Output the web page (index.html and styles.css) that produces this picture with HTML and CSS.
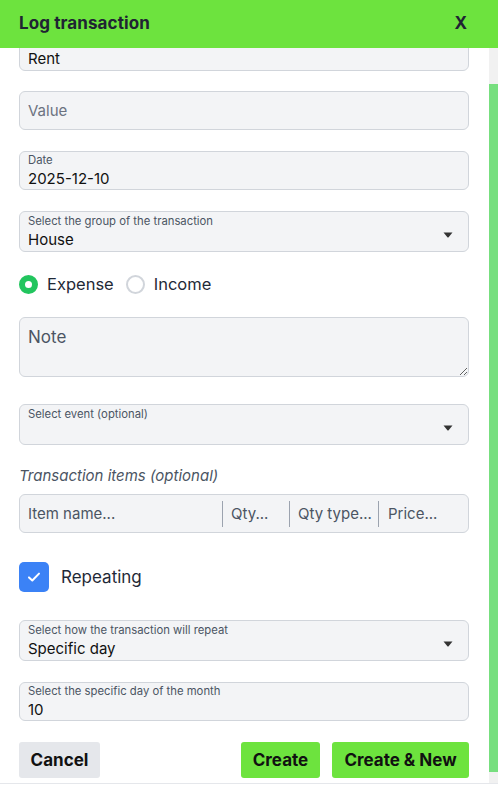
FILE: index.html
```html
<!DOCTYPE html>
<html>
<head>
<meta charset="utf-8">
<link rel="stylesheet" href="styles.css">
</head>
<body>
<div class="modal">
  <div class="header">
    <span class="title">Log transaction</span>
    <span class="close">X</span>
  </div>
  <div class="body">
    <div class="content">
      <div class="form">
        <div class="field labeled f-rent">
          <input class="value" type="text" value="Rent">
        </div>
        <div class="field plain f-value">
          <input class="value" type="text" placeholder="Value">
        </div>
        <div class="field labeled f-date">
          <span class="label">Date</span>
          <input class="value" type="text" value="2025-12-10">
        </div>
        <div class="field select f-group">
          <div class="select-text">
            <span class="label">Select the group of the transaction</span>
            <span class="value">House</span>
          </div>
          <svg class="arrow" width="10" height="6" viewBox="0 0 10 6"><path d="M0.5 0.5 H9.5 L5.6 5.3 Q5 5.9 4.4 5.3 Z" fill="#333"/></svg>
        </div>
        <div class="radios f-radio">
          <label class="radio"><span class="dot on"></span>Expense</label>
          <label class="radio"><span class="dot"></span>Income</label>
        </div>
        <textarea class="note f-note" placeholder="Note"></textarea>
        <div class="field select f-event">
          <div class="select-text">
            <span class="label">Select event (optional)</span>
            <span class="value">&nbsp;</span>
          </div>
          <svg class="arrow" width="10" height="6" viewBox="0 0 10 6"><path d="M0.5 0.5 H9.5 L5.6 5.3 Q5 5.9 4.4 5.3 Z" fill="#333"/></svg>
        </div>
        <div class="items-title f-ititle">Transaction items (optional)</div>
        <div class="items f-items">
          <span class="col c1">Item name...</span>
          <span class="div"></span>
          <span class="col c2">Qty...</span>
          <span class="div"></span>
          <span class="col c3">Qty type...</span>
          <span class="div"></span>
          <span class="col c4">Price...</span>
        </div>
        <label class="check f-check">
          <span class="box"><svg width="14" height="12" viewBox="0 0 14 12"><path d="M2 6.4 L5.3 9.5 L12 2.6" fill="none" stroke="#fff" stroke-width="2" stroke-linecap="round" stroke-linejoin="round"/></svg></span>
          Repeating
        </label>
        <div class="field select f-repeat">
          <div class="select-text">
            <span class="label">Select how the transaction will repeat</span>
            <span class="value">Specific day</span>
          </div>
          <svg class="arrow" width="10" height="6" viewBox="0 0 10 6"><path d="M0.5 0.5 H9.5 L5.6 5.3 Q5 5.9 4.4 5.3 Z" fill="#333"/></svg>
        </div>
        <div class="field labeled f-day">
          <span class="label">Select the specific day of the month</span>
          <input class="value" type="text" value="10">
        </div>
        <div class="buttons">
          <button class="btn cancel">Cancel</button>
          <div class="right">
            <button class="btn green">Create</button>
            <button class="btn green">Create &amp; New</button>
          </div>
        </div>
      </div>
    </div>
    <div class="scrollbar"><div class="thumb"></div></div>
  </div>
</div>
</body>
</html>
```

FILE: styles.css
```css
* { box-sizing: border-box; }
html, body { margin: 0; padding: 0; background: #fff; }
body { font-family: Inter, "Noto Sans", sans-serif; color: #111; }

.modal { width: 498px; height: 786px; display: flex; flex-direction: column; }

.header {
  height: 48px; flex: none; background: #6de33e;
  display: flex; align-items: center; justify-content: space-between;
  padding: 0 31px 3px 19px; color: #1f2433;
}
.title { font-size: 17px; font-weight: 700; letter-spacing: 0.1px; }
.close { font-size: 17px; font-weight: 700; }

.body { height: 736px; flex: none; display: flex; border-bottom: 1px solid #e5e7eb; }
.content { flex: 1; overflow: hidden; padding: 0 20px 0 19px; }
.form { margin-top: -16px; display: flex; flex-direction: column; }

.field {
  background: #f3f4f6; border: 1px solid #d1d5db; border-radius: 6px;
  padding: 0 8px;
}
.label { display: block; font-size: 11.3px; line-height: 14px; color: #4b5563; white-space: nowrap; }
.value {
  display: block; font: inherit; font-size: 15px; line-height: 19px; color: #111;
  border: 0; background: transparent; padding: 0; margin: 0; outline: none; width: 100%;
}
.labeled { height: 39px; padding-top: 1px; }
.labeled .value { margin-top: 2px; }
.f-rent { padding-top: 16px; }
.f-rent .value { margin-top: 0; }
.plain { height: 39px; display: flex; align-items: center; }
.plain .value::placeholder { color: #6b7280; }
.select { height: 41px; padding-top: 2px; display: flex; align-items: flex-start; }
.select-text { flex: 1; }
.select .value { margin-top: 2px; }
.arrow { flex: none; margin-top: 18px; margin-right: 7px; }

.radios { height: 20px; display: flex; align-items: center; gap: 0; }
.radio { display: flex; align-items: center; font-size: 16.5px; color: #1f2937; }
.radio + .radio { margin-left: 12px; }
.dot {
  width: 19px; height: 19px; border-radius: 50%; border: 2px solid #d1d5db;
  background: #fff; margin-right: 9px; display: flex; align-items: center; justify-content: center;
}
.dot.on { background: #22c55e; border-color: #22c55e; }
.dot.on::after { content: ""; width: 7px; height: 7px; border-radius: 50%; background: #fff; }

.note {
  display: block; width: 100%; height: 60px; resize: vertical;
  background: #f3f4f6; border: 1px solid #d1d5db; border-radius: 6px;
  padding: 9px 8px; font-family: inherit; font-size: 17px; line-height: 20px; color: #111; outline: none;
}
.note::placeholder { color: #4b5563; }

.items-title { font-size: 15px; font-style: italic; color: #4b5563; line-height: 20px; }
.items {
  height: 39px; background: #f3f4f6; border: 1px solid #d1d5db; border-radius: 6px;
  display: flex; align-items: center; font-size: 15px; color: #4b5563;
}
.col { padding-left: 8px; white-space: nowrap; overflow: hidden; }
.c1 { width: 202px; }
.c2 { width: 66px; }
.c3 { width: 88px; }
.c4 { flex: 1; padding-left: 9px; }
.div { width: 1px; height: 26px; background: #9ca3af; flex: none; }

.check { height: 30px; display: flex; align-items: center; font-size: 17px; color: #1f2937; }
.box {
  width: 30px; height: 30px; border-radius: 5px; background: #3b82f6;
  display: flex; align-items: center; justify-content: center; margin-right: 12px;
}

.buttons { display: flex; justify-content: space-between; }
.right { display: flex; gap: 12px; }
.btn {
  height: 36px; border: 0; border-radius: 3px; font-family: inherit;
  font-size: 17px; font-weight: 700; color: #111; padding: 0;
}
.cancel { width: 81px; background: #e5e7eb; }
.green { background: #6de33e; }
.right .green:first-child { width: 79px; }
.right .green:last-child { width: 137px; }

.f-rent { margin-bottom: 20px; }
.f-value { margin-bottom: 21px; }
.f-date { margin-bottom: 21px; }
.f-group { margin-bottom: 22px; }
.f-radio { margin-bottom: 23px; }
.f-note { margin-bottom: 27px; }
.f-event { margin-bottom: 21px; }
.f-ititle { margin-bottom: 8px; }
.f-items { margin-bottom: 29px; }
.f-check { margin-bottom: 28px; }
.f-repeat { margin-bottom: 21px; }
.f-day { margin-bottom: 21px; }

.scrollbar { width: 9px; flex: none; background: #f1f1f1; padding-top: 36px; }
.thumb { height: 688px; background: #77df7f; }
```
